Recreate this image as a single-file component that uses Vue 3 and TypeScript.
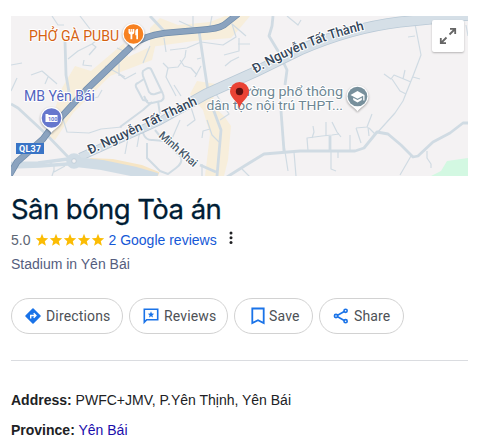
<template>
  <div class="panel">
    <div class="map">
      <svg class="tiles" viewBox="11 16 457 160" width="457" height="160">
        <rect x="11" y="16" width="457" height="160" fill="#f4f2f3" />
        <path v-for="(d, i) in zones" :key="'z' + i" :d="d" fill="#f7eedb" />
        <path d="M431 176 L441 171 L447 161 L468 158 V176 Z" fill="#d3f8e2" />

        <g fill="none" stroke="#d0dbe3" stroke-linejoin="round">
          <path v-for="(d, i) in lanes" :key="'l' + i" :d="d" stroke-width="1.2" />
          <path v-for="(d, i) in loops" :key="'o' + i" :d="d" stroke-width="2" />
          <path v-for="(d, i) in streets" :key="'s' + i" :d="d" stroke-width="2.8" />
        </g>

        <g fill="none" stroke-linejoin="round">
          <path :d="avenue" stroke="#b9c9d6" stroke-width="8" />
          <path :d="avenue" stroke="#d5dfe7" stroke-width="6.4" />
          <path :d="avenueEast" stroke="#b9c9d6" stroke-width="11" />
          <path :d="avenueEast" stroke="#d5dfe7" stroke-width="9.4" />
          <path d="M11 163.500 L38 163 L68 159 M11 167 L40 166 L68 164" stroke="#d0dce5" stroke-width="3.500" />
          <path d="M90 162 L112 163 L141 169 L158 176" stroke="#f6e5c5" stroke-width="8" />
          <path d="M76 162 L102 165 L136 172 L157 178" stroke="#d0dce5" stroke-width="10" />
          <circle cx="74" cy="161" r="5" fill="#f4f2f3" stroke="#d0dce5" stroke-width="5.500" />
          <circle cx="74" cy="161" r="2.300" fill="#f4f2f3" stroke="#b9c9d6" stroke-width=".8" />
          <path :d="highway" stroke="#6f8cab" stroke-width="6.600" />
          <path :d="highway" stroke="#8ba3bf" stroke-width="5.200" />
        </g>

        <g class="label">
          <text x="29" y="40.800" font-size="14.500" textLength="90" lengthAdjust="spacingAndGlyphs" fill="#d56211">PHỞ GÀ PUBU</text>
          <text x="24" y="101" font-size="14.500" textLength="71" lengthAdjust="spacingAndGlyphs" fill="#5264c0">MB Yên Bái</text>
          <text x="229" y="95.700" font-size="13.500" textLength="114" lengthAdjust="spacingAndGlyphs" fill="#6e8794">Trường phổ thông</text>
          <text x="206.500" y="110.300" font-size="13.500" textLength="136.500" lengthAdjust="spacingAndGlyphs" fill="#6e8794">dân tộc nội trú THPT...</text>
        </g>
        <g class="label road" fill="#34465a">
          <text transform="translate(90 154.500) rotate(-25)" font-size="13.200" textLength="119" lengthAdjust="spacingAndGlyphs">Đ. Nguyễn Tất Thành</text>
          <path id="arc" d="M255.500 73.500 Q306 43 370 28.500" fill="none" stroke="none" />
          <text font-size="13.200" textLength="118" lengthAdjust="spacingAndGlyphs"><textPath href="#arc">Đ. Nguyễn Tất Thành</textPath></text>
          <text class="minor" transform="translate(158 136.500) rotate(41)" font-size="11.300" textLength="47">Minh Khai</text>
        </g>

        <rect x="16" y="143" width="28" height="11" fill="#3974c6" />
        <text class="shield" x="19" y="151.700" textLength="22">QL37</text>

        <g v-for="p in pois" :key="p.kind" :transform="`translate(${p.x} ${p.y})`">
          <path class="balloon" d="M0 15 C-3 10 -11 8 -11 0 A11 11 0 1 1 11 0 C11 8 3 10 0 15 Z" />
          <circle r="9.8" :fill="p.color" />
          <g v-if="p.kind === 'food'" fill="#fff">
            <path d="M-5 -5 H.8 V-1.5 Q.8 .2 -1.2 .5 V5.2 H-3 V.5 Q-5 .2 -5 -1.5 Z M1.800 -2.5 Q2 -5.200 4.500 -5.200 V5.200 H2.800 V1.200 H1.800 Z" />
            <path d="M-3.100 -5 V-2.200 M-1.200 -5 V-2.200" stroke="#f78121" stroke-width=".7" />
          </g>
          <g v-else-if="p.kind === 'bank'">
            <path d="M-6 -4 H-3.5 L-2.8 -3 H6 V4 H-6 Z" fill="#fff" />
            <text x="-3.6" y="3" font-size="5.5" fill="#6677cd" font-weight="700">100</text>
          </g>
          <g v-else fill="#fff">
            <path d="M0 -5.5 L-7 -1.5 L0 2.3 L5.7 -.8 V4 H7 V-1.5 Z" />
            <path d="M-4.3 1.2 L0 3.5 L4.3 1.2 V3.5 L0 6 L-4.3 3.5 Z" />
          </g>
        </g>

        <path d="M239.500 108.500 C238 101 230 98 230 91.500 A9.500 9.500 0 0 1 249 91.500 C249 98 241 101 239.500 108.500 Z" fill="#ea4335" />
        <circle cx="239.500" cy="91.500" r="3.700" fill="#5f1111" />
      </svg>
      <button class="expand" aria-label="Expand map">
        <svg viewBox="0 0 32 32" width="32" height="32" fill="none" stroke="#666" stroke-width="1.800">
          <path d="M17.500 14.500 L23 9 M18 8.800 H23.200 V14 M14.500 17.500 L9 23 M8.800 18 V23.200 H14" />
        </svg>
      </button>
    </div>

    <h2 class="title">Sân bóng Tòa án</h2>
    <div class="rating">
      <span>5.0</span>
      <span class="stars">
        <svg v-for="n in 5" :key="n" viewBox="0 0 14 14" width="14" height="14">
          <path d="M7 .8 L8.700 5 L13.200 5.300 L9.800 8.200 L10.900 12.700 L7 10.300 L3.100 12.700 L4.200 8.200 L.8 5.300 L5.300 5 Z" fill="#fbbc04" />
        </svg>
      </span>
      <a class="reviews">2 Google reviews</a>
      <svg class="more" viewBox="0 0 4 14" width="4" height="14" fill="#202124">
        <circle cx="2" cy="2" r="1.500" /><circle cx="2" cy="6.800" r="1.500" /><circle cx="2" cy="11.600" r="1.500" />
      </svg>
    </div>
    <div class="category">Stadium in Yên Bái</div>

    <div class="actions">
      <button v-for="a in actions" :key="a.label" class="chip" :class="a.icon">
        <svg viewBox="0 0 18 18" width="18" height="18" fill="none" stroke="#1a73e8" stroke-width="1.600">
          <template v-if="a.icon === 'directions'">
            <path d="M9 2 L16 9 L9 16 L2 9 Z" fill="#1a73e8" stroke-linejoin="round" />
            <path d="M6.700 11.500 V8.500 H11.300 M9.700 6.300 L11.900 8.500 L9.700 10.700" stroke="#fff" stroke-width="1.400" />
          </template>
          <template v-else-if="a.icon === 'comment'">
            <path d="M2.300 15.200 V2.300 H15.700 V12.700 H4.700 Z" />
            <path d="M9 4.300 L9.900 6.500 L12.200 6.700 L10.400 8.200 L11 10.500 L9 9.300 L7 10.500 L7.600 8.200 L5.800 6.700 L8.100 6.500 Z" fill="#1a73e8" stroke="none" />
          </template>
          <path v-else-if="a.icon === 'save'" d="M3.300 1.500 H14.700 V16 L9 13.300 L3.300 16 Z" stroke-width="1.800" />
          <template v-else>
            <path d="M13.500 3.800 L4.300 9 L13.500 14.200" />
            <circle cx="13.600" cy="3.800" r="1.600" fill="#fff" />
            <circle cx="4" cy="9" r="1.600" fill="#fff" />
            <circle cx="13.600" cy="14.200" r="1.600" fill="#fff" />
          </template>
        </svg>
        <span>{{ a.label }}</span>
      </button>
    </div>

    <div class="facts">
      <p><b>Address:</b> PWFC+JMV, P.Yên Thịnh, Yên Bái</p>
      <p><b>Province:</b> <a>Yên Bái</a></p>
    </div>
  </div>
</template>

<script setup lang="ts">
type Poi = { kind: 'food' | 'bank' | 'school'; x: number; y: number; color: string }
type Action = { label: string; icon: string }

const actions: Action[] = [
  { label: 'Directions', icon: 'directions' },
  { label: 'Reviews', icon: 'comment' },
  { label: 'Save', icon: 'save' },
  { label: 'Share', icon: 'share' },
]

const pois: Poi[] = [
  { kind: 'food', x: 133.5, y: 34, color: '#f78121' },
  { kind: 'bank', x: 51.5, y: 118, color: '#6677cd' },
  { kind: 'school', x: 357.5, y: 96.5, color: '#78909c' },
]

const highway = 'M9 176 L17 162 L43 139 L52 127 L86 90 L133 45 Q143 36 165 33 L200 30 Q218 29 224 25 L238 14'
const avenue = 'M80 157 L100 148 L160 121 L196 101'
const avenueEast = 'M190 103 L206 94 L255 72 L300 50 Q350 28 400 22 L470 15'

const zones = [
  'M62 88 L75 66 L91 71 L124 43 L128 57 L150 47 L158 34 L152 60 L110 76 L73 113 L55 140 L46 135 Z',
  'M150 28 L160 18 L178 25 L210 22 L225 16 H250 L240 28 L231 38 L194 41 L150 47 Z',
  'M190 94 L197 81 L216 84 L212 105 L224 116 L231 126 L228 160 L224 176 H205 L210 134 L203 110 Z',
]

const streets = [
  'M65 41 L66 75 L69 92',
  'M11 104 L18 108 L45 133 L70 159',
  'M150 16 L165 32',
  'M199 31 L204 65 L208 91',
  'M273 16 L272 26 L269 36 L278 51 L287 70 L285 85',
  'M212 106 L221 130 L217 176',
  'M227 177 L246 165 L264 154 L300 151 L355 151 L364 148 L377 132 L388 134 L401 145 L413 157 L418 156 L433 142 L450 133 L463 123 L468 123',
  'M281 111 L284 151',
  'M330 152 V136',
  'M200 165 L216 172',
]

const loops = [
  'M148 101 L143 100 L136 87 Q135 84 138 83 L144 79',
  'M163 94 L151 69 Q149 67 146 69 L143 71 Q142 73 143 76 L149 92 Q151 95 155 94 L161 92',
  'M163 94 Q165 99 161 101 L152 103 Q149 104 147 102 L144 96',
  'M120 127 L143 110 L152 102 M158 101 L160 114',
  'M146 124 L143 133 Q146 141 153 140 L164 141 L181 157 Q183 163 176 168 L168 174 L160 171 L147 158 V143',
  'M166 141 L171 141 M155 130 L164 141',
]

const lanes = [
  'M11 65 L22 63', 'M52 16 L58 25 L64 25', 'M80 16 L90 29',
  'M31 75 L42 71 L56 83 L57 84 M48 77 L45 84 M68 59 L78 51 L92 44 L96 47 L89 55 M92 44 L97 40 L105 41 M84 60 L83 65 L92 66 M105 66 L125 77',
  'M119 58 V76 M119 74 L125 79 L136 73 M117 48 L128 53 M150 46 L143 63 M164 38 L166 52',
  'M179 21 L192 27 M193 16 V28 M210 26 L212 16',
  'M170 50 L187 48 L201 42 L223 45 L236 37 L232 24 L246 36 M239 38 L239 51 L224 55 M238 44 L250 44 M239 57 L231 61 L225 66',
  'M163 63 L168 68 L178 67 L185 57 L186 50 M180 60 L184 66 L191 68 L197 75 M201 58 L197 59 M195 77 L201 66',
  'M174 85 L181 96 M168 68 L166 77 L176 96',
  'M287 16 L298 25 L301 20',
  'M415 24 L421 55 L413 76 L403 101 L395 113 L377 133 M415 36 L408 37 M384 74 L391 79 L394 75 L411 82 M392 79 L400 91 L406 94 M405 70 L403 79 M413 77 L420 79',
  'M11 91 L17 78 M63 119 L67 132 L89 133 L101 129 L122 127 M102 90 L98 97 L84 101 M140 130 L137 147 M128 138 L125 154',
  'M190 104 L195 120 L187 126 M202 138 L203 131 L210 129 M207 120 L212 135 L219 142 M216 94 L229 114 L220 120',
  'M308 151 L307 138 L322 136 L332 135 L339 134 M313 126 L314 132 L312 138 M326 122 V136 M332 122 L337 132 L341 137 M350 135 V151 M331 152 V169 L336 171 M338 151 V158',
  'M356 128 L367 127 L372 114 M356 128 L361 143 M368 127 L369 136 M369 128 L375 134',
  'M411 156 L400 175 M427 151 V158 L431 164 V168 M294 152 L296 176 M242 169 L250 177 M284 145 L288 171 M180 120 L171 141',
  'M48 162 L54 165 V172 L65 166 M52 176 L54 170 M202 164 V176',
  'M466 25 L468 36',
]
</script>

<style scoped>
.panel {
  box-sizing: border-box;
  width: 478px;
  height: 445px;
  padding: 16px 10px 0 11px;
  overflow: hidden;
  background: #fff;
  font-family: "Liberation Sans", Arial, sans-serif;
  font-size: 14px;
  color: #202124;
}
.map {
  position: relative;
  height: 160px;
}
.tiles {
  display: block;
  font-family: Roboto, sans-serif;
}
.label text {
  paint-order: stroke;
  stroke: #fff;
  stroke-width: 2px;
  stroke-linejoin: round;
}
.road text {
  font-weight: 500;
}
.road .minor {
  fill: #4a5b6c;
}
.shield {
  fill: #fff;
  font-size: 9px;
  font-weight: 700;
}
.balloon {
  fill: #fff;
  filter: drop-shadow(0 1px 1px rgba(0, 0, 0, 0.35));
}
.expand {
  position: absolute;
  top: 4px;
  right: 4px;
  width: 32px;
  height: 32px;
  padding: 0;
  border: 0;
  border-radius: 2px;
  background: #fff;
  box-shadow: 0 1px 2px rgba(0, 0, 0, 0.25);
}
.title {
  height: 40px;
  margin: 14px 0 0;
  font: 400 27.5px/39px Inter, sans-serif;
  letter-spacing: -0.55px;
  white-space: nowrap;
  color: #001d35;
  -webkit-text-stroke: 0.3px #001d35;
}
.rating {
  display: flex;
  align-items: center;
  height: 20px;
  color: #5c6573;
}
.stars {
  display: flex;
  margin: 0 3px 0 5px;
}
.reviews {
  color: #1558d6;
}
.more {
  margin: -4px 0 0 12px;
}
.category {
  margin-top: 6px;
  line-height: 16px;
  color: #545d7e;
}
.actions {
  display: flex;
  gap: 6px;
  margin-top: 26px;
}
.chip {
  display: flex;
  align-items: center;
  box-sizing: border-box;
  height: 36px;
  width: 112px;
  padding: 0 0 0 12px;
  gap: 4px;
  border: 1px solid #d2d2d2;
  border-radius: 18px;
  background: #fff;
  font: 14px Roboto, sans-serif;
  letter-spacing: 0.15px;
  color: #4d5156;
}
.comment {
  width: 99px;
}
.save {
  width: 79px;
  padding-left: 14px;
  gap: 2px;
}
.share {
  width: 85px;
}
.facts {
  margin-top: 26px;
  padding-top: 30px;
  border-top: 1px solid #dadce0;
}
.facts p {
  margin: 0 0 12px;
  line-height: 18px;
  white-space: nowrap;
}
.facts a {
  color: #1a0dab;
}
</style>

<style>
body {
  margin: 0;
  background: #fff;
}
</style>
